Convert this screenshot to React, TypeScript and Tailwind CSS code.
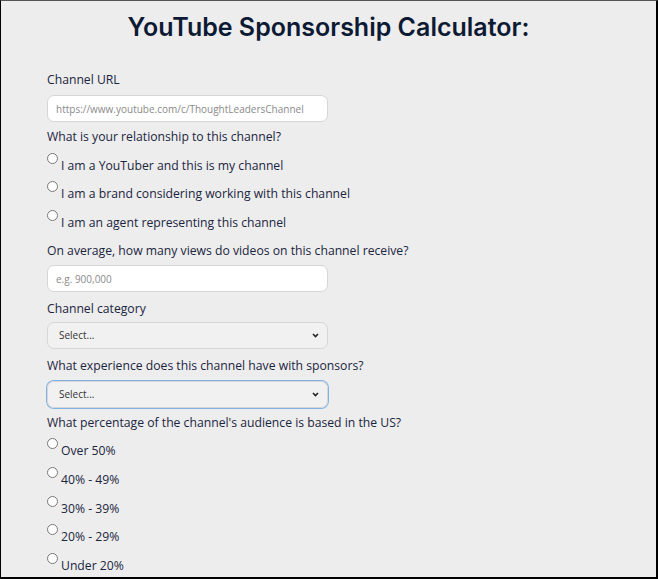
import React from "react";

const font = { fontFamily: '"Open Sans", "Noto Sans", sans-serif' };

function Label({ children }: { children: React.ReactNode }) {
  return <p className="h-[18px] text-[12.2px] leading-[18px] text-[#1b2540]">{children}</p>;
}

function Radio({ name, label }: { name: string; label: string }) {
  return (
    <label className="flex h-[18px] items-start text-[12.2px] leading-[18px] text-[#1b2540]">
      <input type="radio" name={name} className="m-0 mt-[-3px] h-[11px] w-[11px] shrink-0" />
      <span className="ml-[3px] mt-[1px]">{label}</span>
    </label>
  );
}

function Select() {
  return (
    <div className="relative w-[281px]">
      <select
        defaultValue=""
        className="block h-[27px] w-full appearance-none rounded-[7px] border border-[#d6d6d6] bg-[#f1f1f1] pl-[11px] text-[10px] text-[#333] outline-none"
      >
        <option value="">Select...</option>
      </select>
      <svg className="pointer-events-none absolute right-[9px] top-[11px]" width="7" height="5" viewBox="0 0 7 5">
        <path d="M1 1l2.5 2.5L6 1" fill="none" stroke="#222" strokeWidth="1.6" />
      </svg>
    </div>
  );
}

export default function App() {
  return (
    <div
      style={font}
      className="h-[579px] w-[658px] overflow-hidden border-t border-l border-r-2 border-b-2 border-t-[#555] border-l-black border-r-black border-b-black bg-[#ededed]"
    >
      <h1
        className="mt-[10px] text-center text-[25px] font-semibold leading-[32px] text-[#0d1a33]"
        style={{ fontFamily: "Inter, sans-serif" }}
      >
        YouTube Sponsorship Calculator:
      </h1>

      <div className="mt-[28px] pl-[46px]">
        <Label>Channel URL</Label>
        <input
          placeholder="https://www.youtube.com/c/ThoughtLeadersChannel"
          className="mt-[6px] block h-[27px] w-[281px] rounded-[7px] border border-[#d6d6d6] bg-white px-[8px] text-[10px] outline-none placeholder:text-[#8a8a8a]"
        />

        <div className="mt-[6px]">
          <Label>What is your relationship to this channel?</Label>
        </div>
        <div className="mt-[10px] flex flex-col gap-[10.25px]">
          <Radio name="rel" label="I am a YouTuber and this is my channel" />
          <Radio name="rel" label="I am a brand considering working with this channel" />
          <Radio name="rel" label="I am an agent representing this channel" />
        </div>

        <div className="mt-[11.5px]">
          <Label>On average, how many views do videos on this channel receive?</Label>
        </div>
        <input
          placeholder="e.g. 900,000"
          className="mt-[5px] block h-[27px] w-[281px] rounded-[7px] border border-[#d6d6d6] bg-white px-[8px] text-[10px] outline-none placeholder:text-[#8a8a8a]"
        />

        <div className="mt-[8px]">
          <Label>Channel category</Label>
        </div>
        <div className="mt-[4px]">
          <Select />
        </div>

        <div className="mt-[8px]">
          <Label>What experience does this channel have with sponsors?</Label>
        </div>
        <div className="mt-[6px] w-[281px] rounded-[7px] ring-1 ring-[#7fb2e5]">
          <Select />
        </div>

        <div className="mt-[6px]">
          <Label>What percentage of the channel's audience is based in the US?</Label>
        </div>
        <div className="mt-[9px] flex flex-col gap-[10.75px]">
          <Radio name="us" label="Over 50%" />
          <Radio name="us" label="40% - 49%" />
          <Radio name="us" label="30% - 39%" />
          <Radio name="us" label="20% - 29%" />
          <Radio name="us" label="Under 20%" />
        </div>
      </div>
    </div>
  );
}
